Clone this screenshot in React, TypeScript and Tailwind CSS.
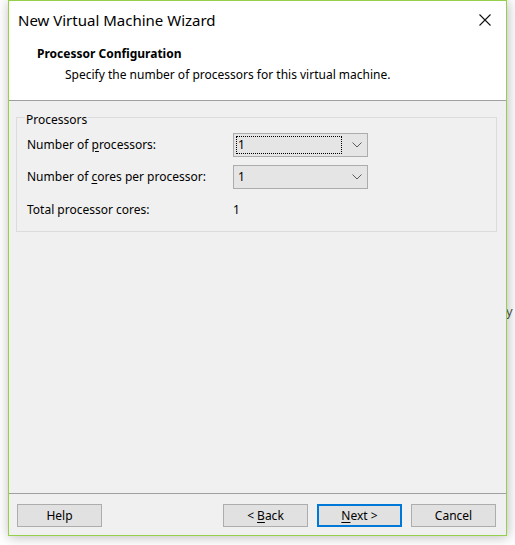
import React from 'react';

function Chevron() {
  return (
    <svg width="10" height="6" viewBox="0 0 10 6" className="shrink-0">
      <path d="M0.5 0.5 L5 5 L9.5 0.5" fill="none" stroke="#5a5a5a" strokeWidth="1" />
    </svg>
  );
}

function Combo({ value, focused = false }: { value: string; focused?: boolean }) {
  return (
    <div className="w-[135px] h-[24px] bg-[#e5e5e5] border border-[#acacac] flex items-center pl-[2px] pr-[5px]">
      <div className={`flex-1 h-[18px] flex items-center pl-[1px] mr-[10px] ${focused ? 'border border-dotted border-black' : 'border border-transparent'}`}>
        {value}
      </div>
      <Chevron />
    </div>
  );
}

function Button({ children, primary = false }: { children: React.ReactNode; primary?: boolean }) {
  return (
    <button
      className={`w-[85px] h-[23px] bg-[#e1e1e1] flex items-center justify-center text-[12px] text-black ${
        primary ? 'border-2 border-[#0078d7]' : 'border border-[#adadad]'
      }`}
    >
      {children}
    </button>
  );
}

export default function App() {
  return (
    <div className="w-[515px] h-[545px] bg-white relative overflow-hidden font-['Noto_Sans',sans-serif] text-black text-[12px]">
      {/* text from the window behind */}
      <span className="absolute left-[506px] top-[302px] text-[13px] text-[#555]">y</span>

      <div className="relative ml-2 w-[499px] h-[536px] border border-[#96d04a] bg-[#f0f0f0] flex flex-col shadow-[1px_1px_12px_rgba(0,0,0,0.28)]">
        {/* header */}
        <div className="bg-white h-[100px] border-b border-[#a0a0a0] flex flex-col">
          <div className="h-[38px] flex items-center justify-between pl-[9px] pr-[15px]">
            <span className="text-[15px] leading-none">New Virtual Machine Wizard</span>
            <svg width="12" height="12" viewBox="0 0 12 12">
              <path d="M0.5 0.5 L11.5 11.5 M11.5 0.5 L0.5 11.5" stroke="#111" strokeWidth="1.1" />
            </svg>
          </div>
          <div className="pl-[28px] mt-[7px] font-bold leading-[16px]">Processor Configuration</div>
          <div className="pl-[56px] mt-[5px] leading-[16px]">Specify the number of processors for this virtual machine.</div>
        </div>

        {/* body */}
        <div className="flex-1 pt-[9px] px-[7px]">
          <fieldset className="w-[481px] h-[122px] border border-[#dcdcdc] px-[10px] pb-0 m-0">
            <legend className="ml-[-2px] px-[1px] leading-[14px] relative top-[3px]">Processors</legend>
            <div className="grid grid-cols-[206px_135px] items-center gap-y-[8px] mt-[9px]">
              <span>
                Number of <u className="underline-offset-2">p</u>rocessors:
              </span>
              <Combo value="1" focused />
              <span>
                Number of <u className="underline-offset-2">c</u>ores per processor:
              </span>
              <Combo value="1" />
              <span className="h-[24px] flex items-center mt-[1px]">Total processor cores:</span>
              <span className="pl-[0px] mt-[1px]">1</span>
            </div>
          </fieldset>
        </div>

        {/* footer */}
        <div className="h-[42px] border-t border-[#a0a0a0] flex items-start justify-between pt-[10px] pl-[8px] pr-[10px]">
          <Button>Help</Button>
          <div className="flex gap-[9px]">
            <Button>
              &lt; <u className="underline-offset-2 ml-[3px]">B</u>ack
            </Button>
            <Button primary>
              <u className="underline-offset-2">N</u>ext &gt;
            </Button>
            <Button>Cancel</Button>
          </div>
        </div>
      </div>
    </div>
  );
}
